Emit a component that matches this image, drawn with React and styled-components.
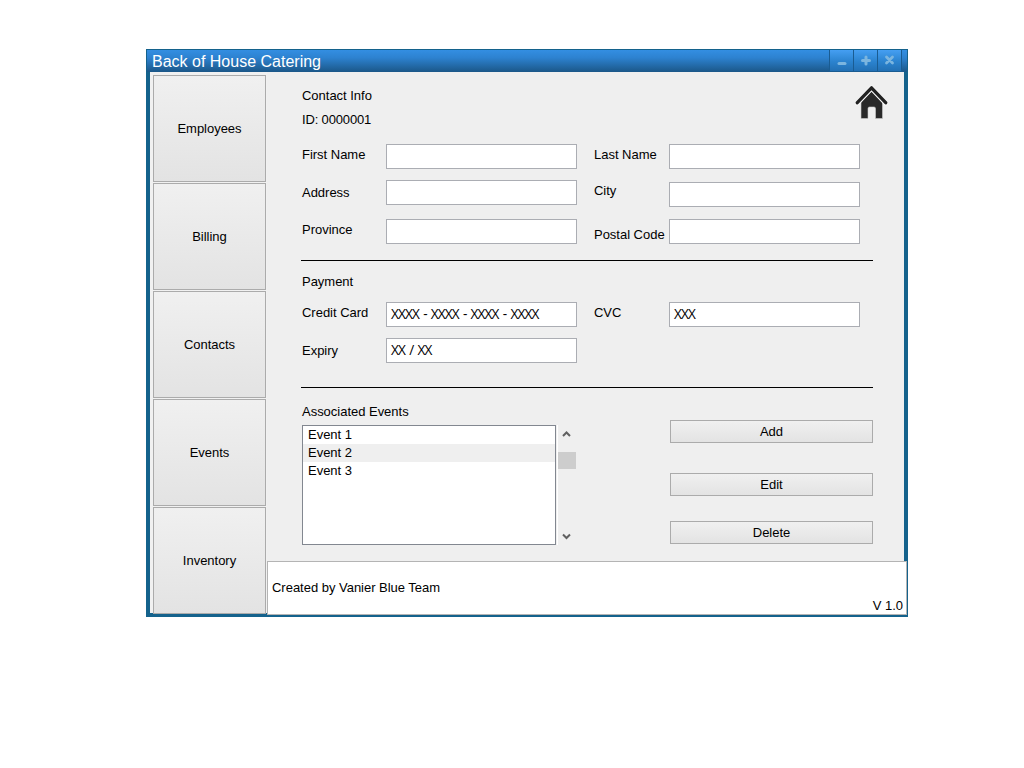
import React from "react";
import styled, { createGlobalStyle } from "styled-components";

const GlobalStyle = createGlobalStyle`
  body { margin: 0; background: #fff; }
  * { box-sizing: border-box; }
`;

const Page = styled.main`
  padding: 49px 0 0 146px;
  font: 13px/16px "Liberation Sans", Arial, sans-serif;
  letter-spacing: -0.02px;
  color: #000;
`;

const Window = styled.section`
  width: 762px;
  height: 568px;
  display: flex;
  flex-direction: column;
  background: #14628c;
`;

const TitleBar = styled.header`
  height: 23px;
  flex: none;
  display: flex;
  justify-content: space-between;
  padding-right: 5px;
  border: 1px solid #14628c;
  border-bottom: 0;
  background: linear-gradient(#338ee2, #2d82d0 35%, #1b5788);
`;

const Title = styled.h1`
  margin: 0;
  padding-left: 5px;
  font-size: 16px;
  font-weight: 400;
  line-height: 23px;
  letter-spacing: 0;
  color: #fff;
`;

const WindowControls = styled.div`
  display: flex;
  gap: 1px;
  padding: 0 1px 1px;
  background: #1a5c92;
`;

const ControlButton = styled.button`
  width: 23px;
  height: 21px;
  padding: 0;
  border: 0;
  background: linear-gradient(#459ff2, #2b83cf 55%, #2270b4);
  svg { display: block; }
`;

const Body = styled.div`
  display: flex;
  height: 545px;
  padding-left: 4px;
`;

const Sidebar = styled.nav`
  width: 117px;
  height: 541px;
  flex: none;
  display: flex;
  flex-direction: column;
  gap: 1px;
  padding: 3px 0 0 3px;
  background: #f1f1f1;
`;

const Button = styled.button`
  flex: none;
  padding: 0;
  border: 1px solid #ababab;
  border-radius: 0;
  background: linear-gradient(#f0f0f0, #e3e3e3);
  font: inherit;
  letter-spacing: inherit;
  color: #000;
`;

const NavButton = styled(Button)`
  width: 113px;
  height: 107px;
`;

const ActionButton = styled(Button)`
  width: 203px;
  height: 23px;
`;

const Main = styled.div`
  width: 641px;
`;

const Content = styled.div`
  width: 637px;
  height: 489px;
  padding: 13px 0 0 35px;
  background: #efefef;
`;

const TopRow = styled.div`
  display: flex;
  justify-content: space-between;
  height: 59px;
  padding-right: 15px;
`;

const Heading = styled.h2`
  margin: 0;
  font-size: 13px;
  font-weight: 400;
`;

const Identity = styled.div`
  padding-top: 3px;
`;

const Identifier = styled.p`
  margin: 8px 0 0;
  letter-spacing: -0.15px;
`;

const Form = styled.div`
  display: grid;
  grid-template-columns: 84px 208px 75px 191px;
  grid-template-rows: ${(p) => p.$rows};
`;

const Label = styled.label`
  padding-top: ${(p) => p.$top}px;
  white-space: nowrap;
`;

const Field = styled.div`
  width: 191px;
  height: 25px;
  margin-top: ${(p) => p.$top || 0}px;
  padding: 3px 0 0 4px;
  border: 1px solid #abadb3;
  background: #fff;
  font-family: "Open Sans", "Liberation Sans", sans-serif;
  font-size: 13.6px;
  letter-spacing: -0.85px;
  word-spacing: 1.45px;
  white-space: nowrap;
`;

const Divider = styled.hr`
  width: 572px;
  height: 1px;
  margin: 0 0 0 -1px;
  border: 0;
  background: #000;
`;

const Payment = styled.div`
  height: 126px;
  padding-top: 13px;
`;

const Associated = styled.div`
  display: flex;
  padding-top: 16px;
`;

const ListRow = styled.div`
  display: flex;
  margin-top: 5px;
`;

const EventList = styled.ul`
  width: 254px;
  height: 120px;
  margin: 0;
  padding: 0;
  border: 1px solid #828790;
  background: #fff;
  list-style: none;
`;

const EventItem = styled.li`
  height: 18px;
  padding: 1px 0 0 5px;
  background: ${(p) => (p.$selected ? "#efefef" : "transparent")};
`;

const ScrollBar = styled.div`
  width: 20px;
  height: 120px;
  margin-left: 1px;
  display: flex;
  flex-direction: column;
  border-left: 1px solid #fff;
`;

const ScrollThumb = styled.div`
  width: 18px;
  height: 17px;
  margin: 15px 0 62px;
  background: #cdcdcd;
`;

const Arrow = styled.svg`
  flex: none;
  display: block;
  margin: ${(p) => p.$top || 0}px 0 0 4px;
`;

const Actions = styled.div`
  display: flex;
  flex-direction: column;
  padding: 16px 0 0 93px;
  ${ActionButton}:nth-child(2) { margin: 30px 0 25px; }
`;

const Footer = styled.footer`
  display: flex;
  justify-content: space-between;
  width: 640px;
  height: 54px;
  padding: 18px 3px 0 4px;
  border: 1px solid #b4b4b4;
  background: #fff;
`;

const Version = styled.span`
  padding-top: 18px;
`;

const sections = ["Employees", "Billing", "Contacts", "Events", "Inventory"];

function HomeIcon() {
  return (
    <svg width="34" height="36" viewBox="0 0 34 36">
      <path d="M6 17 16.5 6 27.5 17V33.5H20.5V23.5Q20.5 22 19 22H14.5Q13 22 13 23.5V33.5H6Z" fill="#292929" stroke="#cfcfcf" strokeWidth="0.6" />
      <path d="M2.3 18 16.5 3 30.7 18" fill="none" stroke="#f6f6f6" strokeWidth="5.2" strokeLinecap="round" strokeLinejoin="round" />
      <path d="M2.3 17.7 16.5 2.8 30.7 17.7" fill="none" stroke="#222" strokeWidth="3.3" strokeLinecap="round" strokeLinejoin="round" />
    </svg>
  );
}

export default function App() {
  return (
    <Page>
      <GlobalStyle />
      <Window>
        <TitleBar>
          <Title>Back of House Catering</Title>
          <WindowControls>
            <ControlButton aria-label="Minimize">
              <svg width="23" height="21"><rect x="7.5" y="12" width="9" height="3" rx="1.5" fill="#7bb5df" /></svg>
            </ControlButton>
            <ControlButton aria-label="Maximize">
              <svg width="23" height="21"><path d="M12 7v7M8.5 10.5h7" stroke="#7bb5df" strokeWidth="3" strokeLinecap="round" /></svg>
            </ControlButton>
            <ControlButton aria-label="Close">
              <svg width="23" height="21"><path d="m8.5 7 6 6m0-6-6 6" stroke="#7bb5df" strokeWidth="2.8" strokeLinecap="round" /></svg>
            </ControlButton>
          </WindowControls>
        </TitleBar>
        <Body>
          <Sidebar>
            {sections.map((name) => (
              <NavButton key={name}>{name}</NavButton>
            ))}
          </Sidebar>
          <Main>
            <Content>
              <TopRow>
                <Identity>
                  <Heading>Contact Info</Heading>
                  <Identifier>ID: 0000001</Identifier>
                </Identity>
                <HomeIcon />
              </TopRow>
              <Form $rows="36px 39px 41px">
                <Label $top={3}>First Name</Label>
                <Field />
                <Label $top={3}>Last Name</Label>
                <Field />
                <Label $top={5}>Address</Label>
                <Field />
                <Label $top={3}>City</Label>
                <Field $top={2} />
                <Label $top={3}>Province</Label>
                <Field />
                <Label $top={8}>Postal Code</Label>
                <Field />
              </Form>
              <Divider />
              <Payment>
                <Heading>Payment</Heading>
                <Form $rows="48px 36px">
                  <Label $top={15}>Credit Card</Label>
                  <Field $top={12}>XXXX - XXXX - XXXX - XXXX</Field>
                  <Label $top={15}>CVC</Label>
                  <Field $top={12}>XXX</Field>
                  <Label $top={5}>Expiry</Label>
                  <Field>XX / XX</Field>
                </Form>
              </Payment>
              <Divider />
              <Associated>
                <div>
                  <Heading>Associated Events</Heading>
                  <ListRow>
                    <EventList>
                      <EventItem>Event 1</EventItem>
                      <EventItem $selected>Event 2</EventItem>
                      <EventItem>Event 3</EventItem>
                    </EventList>
                    <ScrollBar>
                      <Arrow $top={5} width="9" height="7"><path d="M1 6 4.5 2.5 8 6" fill="none" stroke="#606060" strokeWidth="2" /></Arrow>
                      <ScrollThumb />
                      <Arrow $top={2} width="9" height="7"><path d="M1 1.5 4.5 5 8 1.5" fill="none" stroke="#606060" strokeWidth="2" /></Arrow>
                    </ScrollBar>
                  </ListRow>
                </div>
                <Actions>
                  <ActionButton>Add</ActionButton>
                  <ActionButton>Edit</ActionButton>
                  <ActionButton>Delete</ActionButton>
                </Actions>
              </Associated>
            </Content>
            <Footer>
              <span>Created by Vanier Blue Team</span>
              <Version>V 1.0</Version>
            </Footer>
          </Main>
        </Body>
      </Window>
    </Page>
  );
}
